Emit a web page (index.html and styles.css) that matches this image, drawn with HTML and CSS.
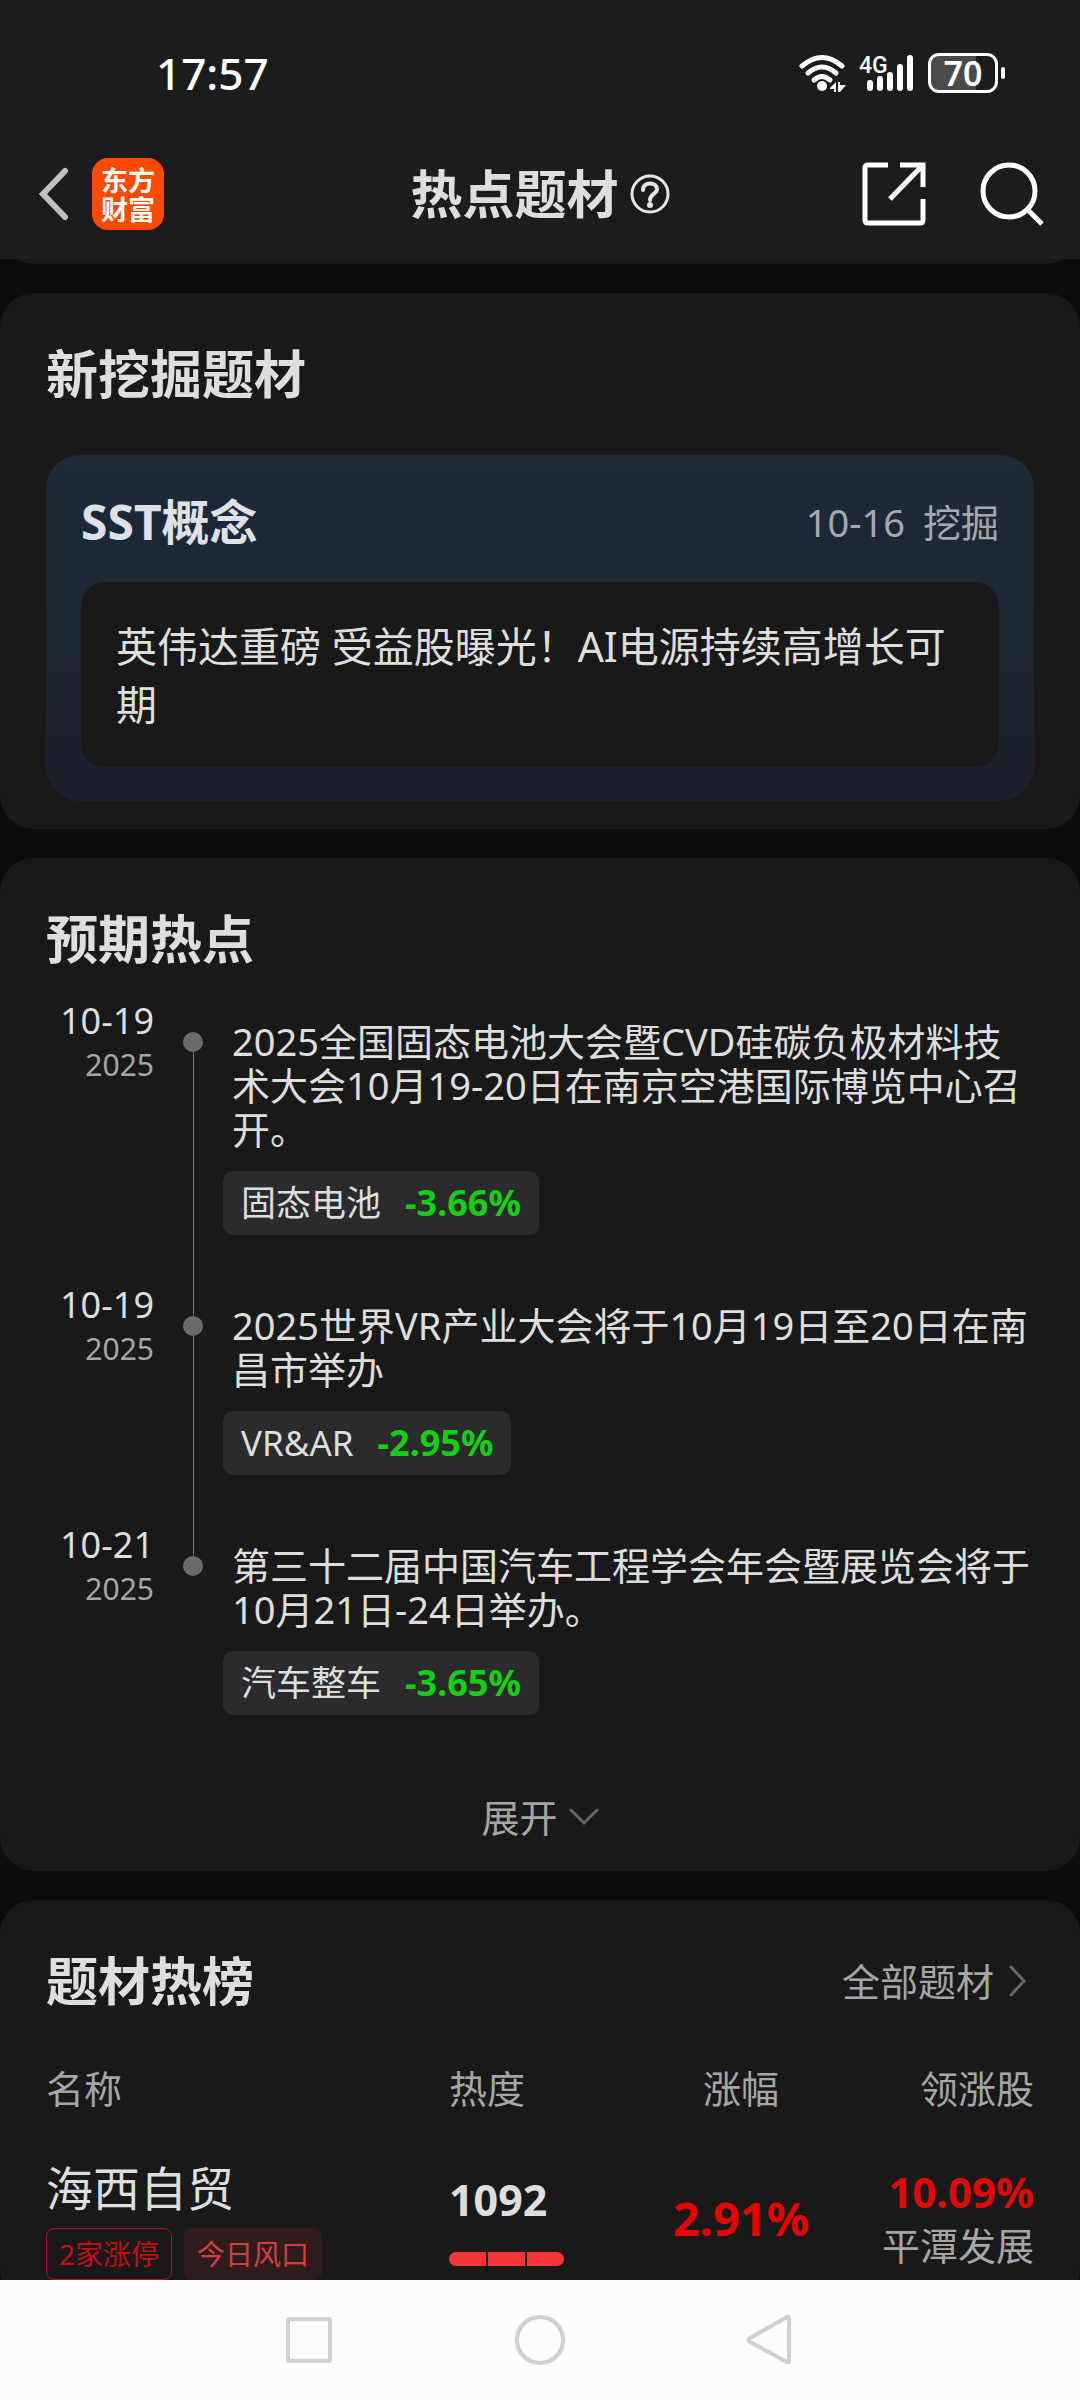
FILE: index.html
```html
<!DOCTYPE html>
<html lang="zh-CN">
<head>
<meta charset="utf-8">
<meta name="viewport" content="width=device-width, initial-scale=1">
<title>热点题材</title>
<link rel="stylesheet" href="styles.css">
</head>
<body>
<header class="top">
  <div class="status">
    <time class="clock">17:57</time>
    <div class="status-icons">
      <svg class="wifi" width="48" height="38" viewBox="0 0 48 38" aria-hidden="true">
        <g fill="none" stroke="#fff" stroke-width="5" stroke-linecap="round">
          <path d="M3 12Q23-5 43 12"/><path d="M9 19Q23 7 37 19"/><path d="M15 26Q23 19 31 26"/>
        </g>
        <circle cx="23" cy="32" r="5" fill="#fff"/>
        <path d="M31 34l6-6v10h-2v-3h-4zM39 28h2v3h6l-6 7h-2z" fill="#fff"/>
      </svg>
      <svg class="signal" width="56" height="50" viewBox="0 -6 56 50" aria-label="4G">
        <text x="0" y="19" class="net">4G</text>
        <g stroke="#fff" stroke-width="6" stroke-linecap="round">
          <path d="M11 29v5M21 25v9M31 21v13M41 13v21M51 4v30"/>
        </g>
      </svg>
      <div class="battery"><span class="level">70</span></div>
    </div>
  </div>
  <div class="appbar">
    <div class="bar-left">
      <button class="icon-btn" aria-label="返回">
        <svg width="33" height="54" viewBox="-3 0 33 54"><path d="M26 4L4 27l22 23" fill="none" stroke="#bfbfbf" stroke-width="6" stroke-linecap="round"/></svg>
      </button>
      <a class="logo" href="#">东方财富</a>
    </div>
    <div class="bar-title">
      <h1>热点题材</h1>
      <button class="icon-btn" aria-label="说明">
        <svg width="40" height="42" viewBox="0 0 40 42"><g fill="none" stroke="#e6e6e6" stroke-width="3"><circle cx="20" cy="21" r="18"/><path d="M13 17c0-9 14-8 14-1 0 5-7 5-7 11" stroke-width="4" stroke-linecap="round"/></g><circle cx="20" cy="32" r="3" fill="#e6e6e6"/></svg>
      </button>
    </div>
    <div class="bar-right">
      <button class="icon-btn" aria-label="分享">
        <svg width="64" height="64" viewBox="0 0 64 64"><g fill="none" stroke="#fff" stroke-width="5"><path d="M26 3H6Q3 3 3 6v52q0 3 3 3h52q3 0 3-3V37"/><path d="M38 3h23v22M60 4L28 37"/></g></svg>
      </button>
      <button class="icon-btn" aria-label="搜索">
        <svg width="64" height="64" viewBox="0 0 64 64"><g fill="none" stroke="#fff" stroke-width="5"><circle cx="29" cy="29" r="26"/><path d="M48 48l14 14"/></g></svg>
      </button>
    </div>
  </div>
</header>

<main class="content">
  <div class="card card-tail"></div>

  <section class="card card-new">
    <h2>新挖掘题材</h2>
    <article class="topic">
      <div class="topic-head">
        <h3>SST概念</h3>
        <p class="topic-date"><time>10-16</time><span>挖掘</span></p>
      </div>
      <p class="topic-text">英伟达重磅 受益股曝光！AI电源持续高增长可期</p>
    </article>
  </section>

  <section class="card card-events">
    <h2>预期热点</h2>
    <ol class="timeline">
      <li class="event">
        <p class="when"><time>10-19</time><span class="year">2025</span></p>
        <div class="rail"><i class="dot"></i></div>
        <div class="what">
          <p class="event-text">2025全国固态电池大会暨CVD硅碳负极材料技术大会10月19-20日在南京空港国际博览中心召开。</p>
          <a class="chip" href="#"><span>固态电池</span><b>-3.66%</b></a>
        </div>
      </li>
      <li class="event">
        <p class="when"><time>10-19</time><span class="year">2025</span></p>
        <div class="rail"><i class="dot"></i></div>
        <div class="what">
          <p class="event-text">2025世界VR产业大会将于10月19日至20日在南昌市举办</p>
          <a class="chip" href="#"><span>VR&amp;AR</span><b>-2.95%</b></a>
        </div>
      </li>
      <li class="event">
        <p class="when"><time>10-21</time><span class="year">2025</span></p>
        <div class="rail"><i class="dot"></i></div>
        <div class="what">
          <p class="event-text">第三十二届中国汽车工程学会年会暨展览会将于10月21日-24日举办。</p>
          <a class="chip" href="#"><span>汽车整车</span><b>-3.65%</b></a>
        </div>
      </li>
    </ol>
    <button class="expand">展开<svg width="30" height="20" viewBox="0 0 30 20" aria-hidden="true"><path d="M2 3l13 13L28 3" fill="none" stroke="#666" stroke-width="3" stroke-linecap="round"/></svg></button>
  </section>

  <section class="card card-rank">
    <div class="rank-head">
      <h2>题材热榜</h2>
      <a class="all" href="#">全部题材<svg width="20" height="32" viewBox="0 0 20 32" aria-hidden="true"><path d="M3 2l13 14L3 30" fill="none" stroke="#666" stroke-width="3" stroke-linecap="round"/></svg></a>
    </div>
    <table class="rank">
      <thead>
        <tr><th class="c-name">名称</th><th class="c-heat">热度</th><th class="c-rise">涨幅</th><th class="c-lead">领涨股</th></tr>
      </thead>
      <tbody>
        <tr>
          <td class="c-name">
            <div class="name">海西自贸</div>
            <div class="tags"><span class="tag tag-line">2家涨停</span><span class="tag tag-fill">今日风口</span></div>
          </td>
          <td class="c-heat">
            <div class="heat">1092</div>
            <div class="meter"><i></i><i></i><i></i></div>
          </td>
          <td class="c-rise"><b class="rise">2.91%</b></td>
          <td class="c-lead"><b class="lead-rise">10.09%</b><span class="lead-name">平潭发展</span></td>
        </tr>
      </tbody>
    </table>
  </section>
</main>

<nav class="sysnav" aria-label="系统导航">
  <button class="icon-btn" aria-label="最近任务"><svg width="50" height="54" viewBox="0 0 50 54"><rect x="4" y="6" width="42" height="42" rx="2" fill="none" stroke="#d0d0d0" stroke-width="4"/></svg></button>
  <button class="icon-btn" aria-label="主屏幕"><svg width="50" height="54" viewBox="0 0 50 54"><circle cx="25" cy="27" r="23" fill="none" stroke="#d0d0d0" stroke-width="4"/></svg></button>
  <button class="icon-btn" aria-label="返回上一级"><svg width="50" height="54" viewBox="0 0 50 54"><path d="M42 4Q43 4 43 6V48Q43 50 41 49L4 29Q1 27 4 25L41 4Z" fill="none" stroke="#d0d0d0" stroke-width="4" stroke-linejoin="round"/></svg></button>
</nav>
</body>
</html>
```
FILE: styles.css
```css
* {
  box-sizing: border-box;
  margin: 0;
  padding: 0;
}

body {
  display: flex;
  flex-direction: column;
  height: 100vh;
  background: #0c0c0c;
  color: #dedede;
  font-family: "Noto Sans", "Noto Sans CJK SC", sans-serif;
  font-size: 38px;
  line-height: 44px;
}

button {
  border: 0;
  background: none;
  color: inherit;
  font: inherit;
  cursor: pointer;
}

a {
  color: inherit;
  text-decoration: none;
}

svg {
  display: block;
}

.icon-btn {
  display: flex;
}

/* Status bar and app bar */
.top {
  flex: none;
  background: #1c1c1c;
}

.status {
  display: flex;
  align-items: center;
  justify-content: space-between;
  height: 128px;
  padding: 18px 82px 0 156px;
  color: #fff;
}

.clock {
  font-size: 44px;
  font-weight: 500;
}

.status-icons {
  display: flex;
  align-items: center;
}

.signal {
  margin: 0 13px 0 12px;
}

.net {
  fill: #fff;
  font-family: Roboto, sans-serif;
  font-size: 23px;
  font-weight: 500;
}

.battery {
  position: relative;
  width: 70px;
  height: 40px;
  border: 3px solid #fff;
  border-radius: 11px;
  background: linear-gradient(90deg, #4a4a4a 70%, transparent 70%);
}

.battery::after {
  content: "";
  position: absolute;
  top: 11px;
  right: -10px;
  width: 4px;
  height: 12px;
  border-radius: 2px;
  background: #fff;
}

.level {
  display: block;
  font-size: 34px;
  font-weight: 600;
  line-height: 34px;
  text-align: center;
}

.appbar {
  display: grid;
  grid-template-columns: 1fr auto 1fr;
  align-items: center;
  height: 131px;
  padding: 0 36px;
}

.bar-left,
.bar-title,
.bar-right {
  display: flex;
  align-items: center;
}

.bar-left {
  gap: 23px;
}

.bar-title {
  gap: 11px;
}

.bar-right {
  justify-content: flex-end;
  gap: 54px;
}

.logo {
  width: 72px;
  height: 72px;
  padding: 7px 9px;
  border-radius: 16px;
  background: #ff4a00;
  color: #fff;
  font-family: "Noto Sans CJK SC", sans-serif;
  font-size: 27px;
  font-weight: 700;
  line-height: 29px;
}

h1,
h2 {
  font-size: 52px;
  font-weight: 700;
  line-height: 60px;
}

/* Cards */
.content {
  flex: 1;
  min-height: 0;
  overflow: hidden;
}

.card {
  margin-bottom: 29px;
  padding: 51px 46px 24px;
  border-radius: 34px;
  background: #19191a;
}

.card-tail {
  height: 80px;
  margin-top: -75px;
}

.card-new {
  padding-bottom: 28px;
}

.topic {
  margin-top: 51px;
  padding: 35px 35px 34px;
  border-radius: 34px;
  background: linear-gradient(#1e2a3a, #1c2633 50%, #1c202a);
}

.topic-head {
  display: flex;
  align-items: center;
  justify-content: space-between;
  height: 64px;
  margin-bottom: 28px;
}

h3 {
  color: #dde2e6;
  font-size: 48px;
}

.topic-date {
  display: flex;
  gap: 18px;
  color: #a4a9b0;
}

.topic-text {
  padding: 35px 35px 34px;
  border-radius: 24px;
  background: #19191a;
  font-size: 41px;
  line-height: 58px;
}

/* Timeline of upcoming events */
.timeline {
  margin-top: 30px;
  list-style: none;
}

.event {
  display: grid;
  grid-template-columns: 108px 78px 1fr;
}

.when {
  display: flex;
  flex-direction: column;
  align-items: flex-end;
  font-size: 36px;
}

.year {
  color: #a6a6a6;
  font-size: 30px;
}

.rail {
  display: flex;
  flex-direction: column;
  align-items: center;
}

.rail::before {
  content: "";
  width: 1px;
  height: 33px;
  background: #777;
}

.rail::after {
  content: "";
  flex: 1;
  width: 1px;
  background: #777;
}

.event:first-child .rail::before,
.event:last-child .rail::after {
  background: none;
}

.dot {
  width: 20px;
  height: 20px;
  border-radius: 50%;
  background: #6b6b6b;
}

.what {
  padding: 20px 0 48px;
}

.event:last-child .what {
  padding-bottom: 0;
}

.chip {
  display: inline-flex;
  gap: 24px;
  margin: 20px 0 0 -9px;
  padding: 10px 18px;
  border-radius: 10px;
  background: #2b2b2d;
  font-size: 35px;
  vertical-align: top;
}

.chip b {
  color: #14cf14;
  font-size: 36px;
}

.expand {
  display: flex;
  align-items: center;
  gap: 11px;
  margin: 72px auto 0;
  color: #a6a6a6;
  line-height: 60px;
}

/* Ranking */
.rank-head,
.all {
  display: flex;
  align-items: center;
  justify-content: space-between;
}

.all {
  gap: 14px;
  padding-right: 6px;
  color: #a6a6a6;
}

.rank {
  width: 100%;
  margin-top: 55px;
  border-collapse: collapse;
  table-layout: fixed;
}

.rank th {
  color: #a6a6a6;
  font-weight: 400;
  text-align: left;
}

.rank td {
  padding-top: 48px;
  vertical-align: top;
}

.rank .c-heat {
  width: 200px;
}

.rank .c-rise {
  width: 184px;
  text-align: center;
}

.rank .c-lead {
  width: 201px;
  text-align: right;
}

.name {
  font-size: 47px;
  line-height: 60px;
}

.tags {
  display: flex;
  gap: 12px;
  margin-top: 10px;
}

.tag {
  padding: 0 12px;
  border: 1px solid;
  border-radius: 8px;
  font-size: 28px;
  line-height: 50px;
}

.tag-line {
  border-color: #b01414;
  color: #c01010;
}

.tag-fill {
  border-color: transparent;
  background: #301c1c;
  color: #d04040;
}

.heat {
  margin-top: 20px;
  font-size: 43px;
  font-weight: 700;
}

.meter {
  display: flex;
  gap: 2px;
  width: 115px;
  height: 14px;
  margin-top: 30px;
  overflow: hidden;
  border-radius: 7px;
}

.meter i {
  flex: 1;
  background: #f53636;
}

.rise {
  display: block;
  margin-top: 38px;
  color: #e80202;
  font-size: 47px;
}

.lead-rise,
.lead-name {
  display: block;
}

.lead-rise {
  margin-top: 12px;
  color: #e00808;
  font-size: 42px;
}

.lead-name {
  margin-top: 9px;
  color: #a6a6a6;
}

/* System navigation */
.sysnav {
  display: flex;
  flex: none;
  align-items: center;
  justify-content: center;
  gap: 181px;
  height: 120px;
  background: #fcfcfc;
}
```
